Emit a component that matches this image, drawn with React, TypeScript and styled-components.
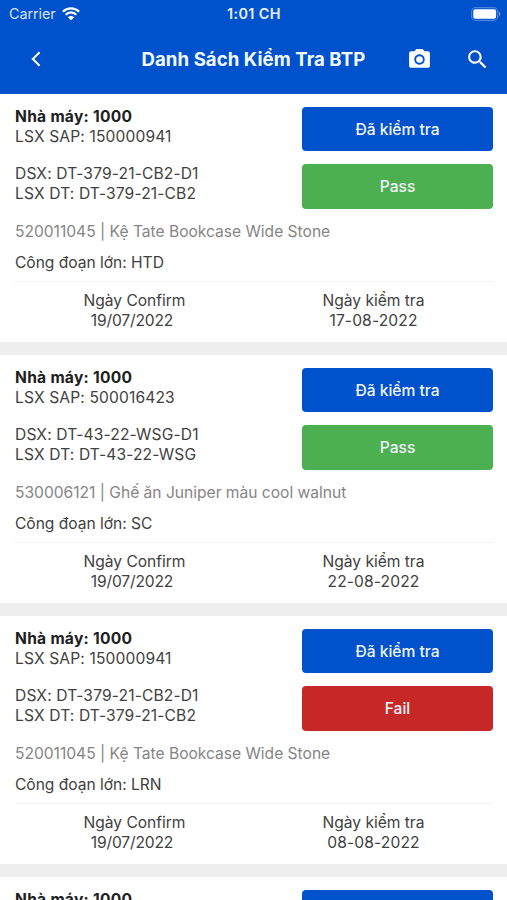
import React from 'react';
import styled, { createGlobalStyle } from 'styled-components';

const GlobalStyle = createGlobalStyle`
  * { box-sizing: border-box; }
  html, body { margin: 0; padding: 0; }
  body {
    background: #eeeeee;
    font-family: Inter, Roboto, "Liberation Sans", sans-serif;
    color: #414141;
    overflow: hidden;
  }
`;

const Screen = styled.div`
  width: 507px;
  height: 900px;
  overflow: hidden;
  display: flex;
  flex-direction: column;
`;

const Header = styled.header`
  flex: none;
  height: 94px;
  background: #0052cc;
  color: #fff;
`;

const StatusBar = styled.div`
  height: 27px;
  display: grid;
  grid-template-columns: 1fr auto 1fr;
  align-items: center;
  padding: 0 6px 0 9px;
`;

const Carrier = styled.div`
  display: flex;
  align-items: center;
  gap: 6px;
  font-size: 14.4px;
  letter-spacing: -0.08px;
  color: #d5e3f8;
`;

const Clock = styled.div`
  margin-left: -2px;
  font-size: 14.4px;
  font-weight: 600;
  letter-spacing: 0.4px;
  color: #e6effb;
`;

const BatteryHolder = styled.div`
  display: flex;
  justify-content: flex-end;
`;

const NavBar = styled.div`
  height: 64px;
  display: grid;
  grid-template-columns: 72px 1fr 58.5px 58.5px;
  align-items: center;
`;

const Title = styled.h1`
  margin: 0;
  padding-left: 69.5px;
  font-size: 18.6px;
  line-height: 24px;
  font-weight: 700;
  letter-spacing: 0.07px;
  white-space: nowrap;
  color: #f3f8ff;
`;

const IconButton = styled.button`
  display: flex;
  justify-content: center;
  align-items: center;
  height: 48px;
  padding: 0;
  border: 0;
  background: none;
  color: #fff;
`;

const List = styled.main`
  display: flex;
  flex-direction: column;
  gap: 13px;
`;

const Card = styled.article`
  flex: none;
  height: 248px;
  padding: 13px 14px 0 15px;
  background: #fff;
`;

const Summary = styled.div`
  display: grid;
  grid-template-columns: 1fr 191px;
`;

const Codes = styled.div`
  display: flex;
  flex-direction: column;
  gap: 17px;
`;

type Tone = 'strong' | 'code' | 'muted' | 'body' | 'date';

const spacing: Record<Tone, string> = {
  strong: '0.26px',
  code: '0.13px',
  muted: '-0.01px',
  body: '-0.03px',
  date: '-0.15px',
};

const Line = styled.div<{ $tone?: Tone }>`
  font-size: 15.6px;
  line-height: 20px;
  letter-spacing: ${({ $tone = 'body' }) => spacing[$tone]};
  white-space: nowrap;
  font-weight: ${({ $tone }) => ($tone === 'strong' ? 700 : 400)};
  color: ${({ $tone }) => ($tone === 'strong' ? '#202020' : $tone === 'muted' ? '#858585' : '#414141')};
  padding-right: ${({ $tone }) => ($tone === 'date' ? '5px' : '0')};
`;

const Actions = styled.div`
  display: flex;
  flex-direction: column;
  gap: 13px;
`;

const colors = { info: '#0052cc', pass: '#4caf50', fail: '#c62828' };

const StatusButton = styled.button<{ $kind: keyof typeof colors }>`
  height: 44.4px;
  padding: 1px 0 0;
  border: 0;
  border-radius: 4px;
  background: ${({ $kind }) => colors[$kind]};
  color: #f1f5fb;
  font: 500 15.6px/20px Inter, Roboto, sans-serif;
`;

const Details = styled.div`
  display: flex;
  flex-direction: column;
  gap: 11px;
  padding: 13.2px 0 8px;
  border-bottom: 1px solid #f2f2f2;
`;

const Dates = styled.div`
  display: grid;
  grid-template-columns: 1fr 1fr;
  padding-top: 9px;
  text-align: center;
`;

interface Item {
  sap: string;
  dt: string;
  product: string;
  stage: string;
  result: 'pass' | 'fail';
  checked: string;
}

const items: Item[] = [
  { sap: '150000941', dt: 'DT-379-21-CB2', product: '520011045 | Kệ Tate Bookcase Wide Stone', stage: 'HTD', result: 'pass', checked: '17-08-2022' },
  { sap: '500016423', dt: 'DT-43-22-WSG', product: '530006121 | Ghế ăn Juniper màu cool walnut', stage: 'SC', result: 'pass', checked: '22-08-2022' },
  { sap: '150000941', dt: 'DT-379-21-CB2', product: '520011045 | Kệ Tate Bookcase Wide Stone', stage: 'LRN', result: 'fail', checked: '08-08-2022' },
];

function WifiIcon() {
  return (
    <svg width="18" height="14" viewBox="0 0 18 14" fill="none" stroke="#fff" strokeWidth="2.2">
      <path d="M.9 4.8C5.4.2 12.6.2 17.1 4.8" />
      <path d="M3.7 7.7C6.7 4.7 11.3 4.7 14.3 7.7" />
      <path d="M9 13.6 5.9 10.3C7.6 8.6 10.4 8.6 12.1 10.3Z" fill="#fff" stroke="none" />
    </svg>
  );
}

function BatteryIcon() {
  return (
    <svg width="30" height="14" viewBox="0 0 30 14">
      <rect x=".6" y=".6" width="26.2" height="12.8" rx="4" fill="none" stroke="#4b85db" strokeWidth="1.1" />
      <rect x="2.3" y="2.3" width="22.8" height="9.4" rx="2" fill="#fff" />
      <path d="M28 4.8c2 .7 2 3.700 0 4.400z" fill="#6396e0" />
    </svg>
  );
}

function CheckCard({ item }: { item: Item }) {
  return (
    <Card>
      <Summary>
        <Codes>
          <div>
            <Line $tone="strong">Nhà máy: 1000</Line>
            <Line $tone="code">LSX SAP: {item.sap}</Line>
          </div>
          <div>
            <Line $tone="code">DSX: {item.dt}-D1</Line>
            <Line $tone="code">LSX DT: {item.dt}</Line>
          </div>
        </Codes>
        <Actions>
          <StatusButton $kind="info">Đã kiểm tra</StatusButton>
          <StatusButton $kind={item.result}>{item.result === 'pass' ? 'Pass' : 'Fail'}</StatusButton>
        </Actions>
      </Summary>
      <Details>
        <Line $tone="muted">{item.product}</Line>
        <Line>Công đoạn lớn: {item.stage}</Line>
      </Details>
      <Dates>
        <div>
          <Line>Ngày Confirm</Line>
          <Line $tone="date">19/07/2022</Line>
        </div>
        <div>
          <Line>Ngày kiểm tra</Line>
          <Line $tone="code">{item.checked}</Line>
        </div>
      </Dates>
    </Card>
  );
}

export default function App() {
  return (
    <Screen>
      <GlobalStyle />
      <Header>
        <StatusBar>
          <Carrier>
            Carrier
            <WifiIcon />
          </Carrier>
          <Clock>1:01 CH</Clock>
          <BatteryHolder>
            <BatteryIcon />
          </BatteryHolder>
        </StatusBar>
        <NavBar>
          <IconButton aria-label="Back">
            <svg width="10" height="16" viewBox="0 0 10 16" fill="none" stroke="#fff" strokeWidth="2">
              <path d="M8.600 1.200 1.800 8l6.800 6.800" />
            </svg>
          </IconButton>
          <Title>Danh Sách Kiểm Tra BTP</Title>
          <IconButton aria-label="Camera">
            <svg width="25" height="25" viewBox="0 0 24 24" fill="currentColor">
              <circle cx="12" cy="12" r="3.200" />
              <path d="M9 2 7.170 4H4c-1.100 0-2 .9-2 2v12c0 1.100.9 2 2 2h16c1.100 0 2-.9 2-2V6c0-1.100-.9-2-2-2h-3.170L15 2H9zm3 15c-2.760 0-5-2.240-5-5s2.240-5 5-5 5 2.240 5 5-2.240 5-5 5z" />
            </svg>
          </IconButton>
          <IconButton aria-label="Search">
            <svg width="25" height="25" viewBox="0 0 24 24" fill="currentColor">
              <path d="M15.500 14h-.79l-.28-.27C15.410 12.590 16 11.110 16 9.500 16 5.910 13.090 3 9.500 3S3 5.910 3 9.500 5.910 16 9.500 16c1.610 0 3.090-.59 4.230-1.570l.27.28v.79l5 4.990L20.490 19l-4.990-5zm-6 0C7.010 14 5 11.990 5 9.500S7.010 5 9.500 5 14 7.010 14 9.500 11.990 14 9.500 14z" />
            </svg>
          </IconButton>
        </NavBar>
      </Header>
      <List>
        {[...items, items[0]].map((item, index) => (
          <CheckCard key={index} item={item} />
        ))}
      </List>
    </Screen>
  );
}
